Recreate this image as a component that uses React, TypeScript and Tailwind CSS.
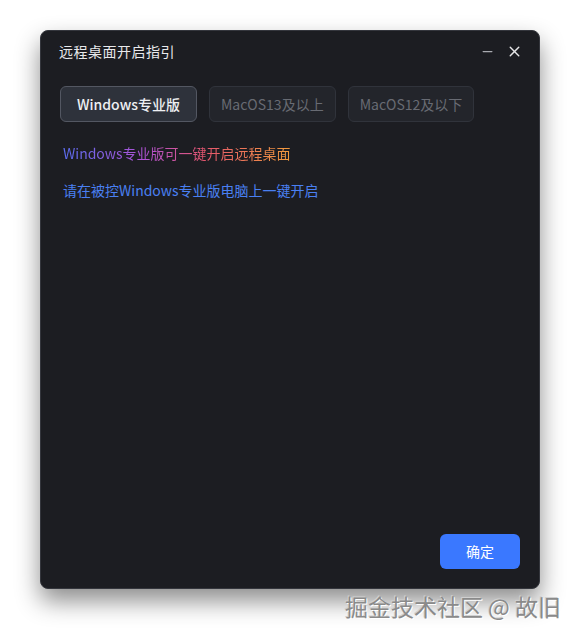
import { Minus, X } from 'lucide-react';

const font = { fontFamily: "'Noto Sans CJK SC', 'Noto Sans', sans-serif" };

const tabs = ['Windows专业版', 'MacOS13及以上', 'MacOS12及以下'];

export default function App() {
    const active = 0;

    return (
        <div className="w-[580px] h-[640px] bg-white flex flex-col items-start pl-[40px] pt-[30px]" style={font}>
            <div className="w-[500px] h-[559px] rounded-[8px] bg-[#1c1d22] border border-[#34363d] shadow-[0_12px_24px_rgba(0,0,0,0.45)] flex flex-col">
                {/* Header */}
                <div className="h-[41px] flex items-center justify-between pl-[18px] pr-[16px]">
                    <span className="text-[14px] text-[#e8e9ec] tracking-[0.5px]">远程桌面开启指引</span>
                    <div className="flex items-center gap-[11px] text-[#e6e6e8]">
                        <Minus size={15} strokeWidth={2} className="text-[#a8aab0]" />
                        <X size={17} strokeWidth={2} />
                    </div>
                </div>

                {/* Tabs */}
                <div className="flex gap-[12px] px-[19px] mt-[14px]">
                    {tabs.map((t, i) => (
                        <button
                            key={t}
                            className={
                                i === active
                                    ? 'h-[36px] px-[16px] rounded-[6px] border border-[#535762] bg-[#2e323b] text-[14px] font-medium text-[#eef0f3]'
                                    : 'h-[36px] px-[11px] rounded-[6px] border border-[#30333b] bg-[#23252b] text-[14px] text-[#686b73]'
                            }
                        >
                            {t}
                        </button>
                    ))}
                </div>

                {/* Content */}
                <div className="flex flex-col gap-[16px] pl-[22px] mt-[21px]">
                    <span className="self-start text-[14px] leading-[21px] bg-[linear-gradient(90deg,#5b6df2,#b152d4_36%,#e4566e_62%,#f29c3c)] bg-clip-text text-transparent">
                        Windows专业版可一键开启远程桌面
                    </span>
                    <span className="text-[14px] leading-[21px] text-[#4a80f2]">
                        请在被控Windows专业版电脑上一键开启
                    </span>
                </div>

                <div className="flex-1" />

                {/* Footer */}
                <div className="flex justify-end px-[19px] pb-[19px]">
                    <button className="w-[80px] h-[35px] rounded-[6px] bg-[#3a78ff] text-[14px] text-white">
                        确定
                    </button>
                </div>
            </div>

            <div className="self-end pr-[19px] mt-[1px] text-[23px] leading-[32px] text-[#8a8a8a] [text-shadow:1px_1px_0_#ffffff,-1px_-1px_0_#d0d0d0]">
                掘金技术社区 @ 故旧
            </div>
        </div>
    );
}
